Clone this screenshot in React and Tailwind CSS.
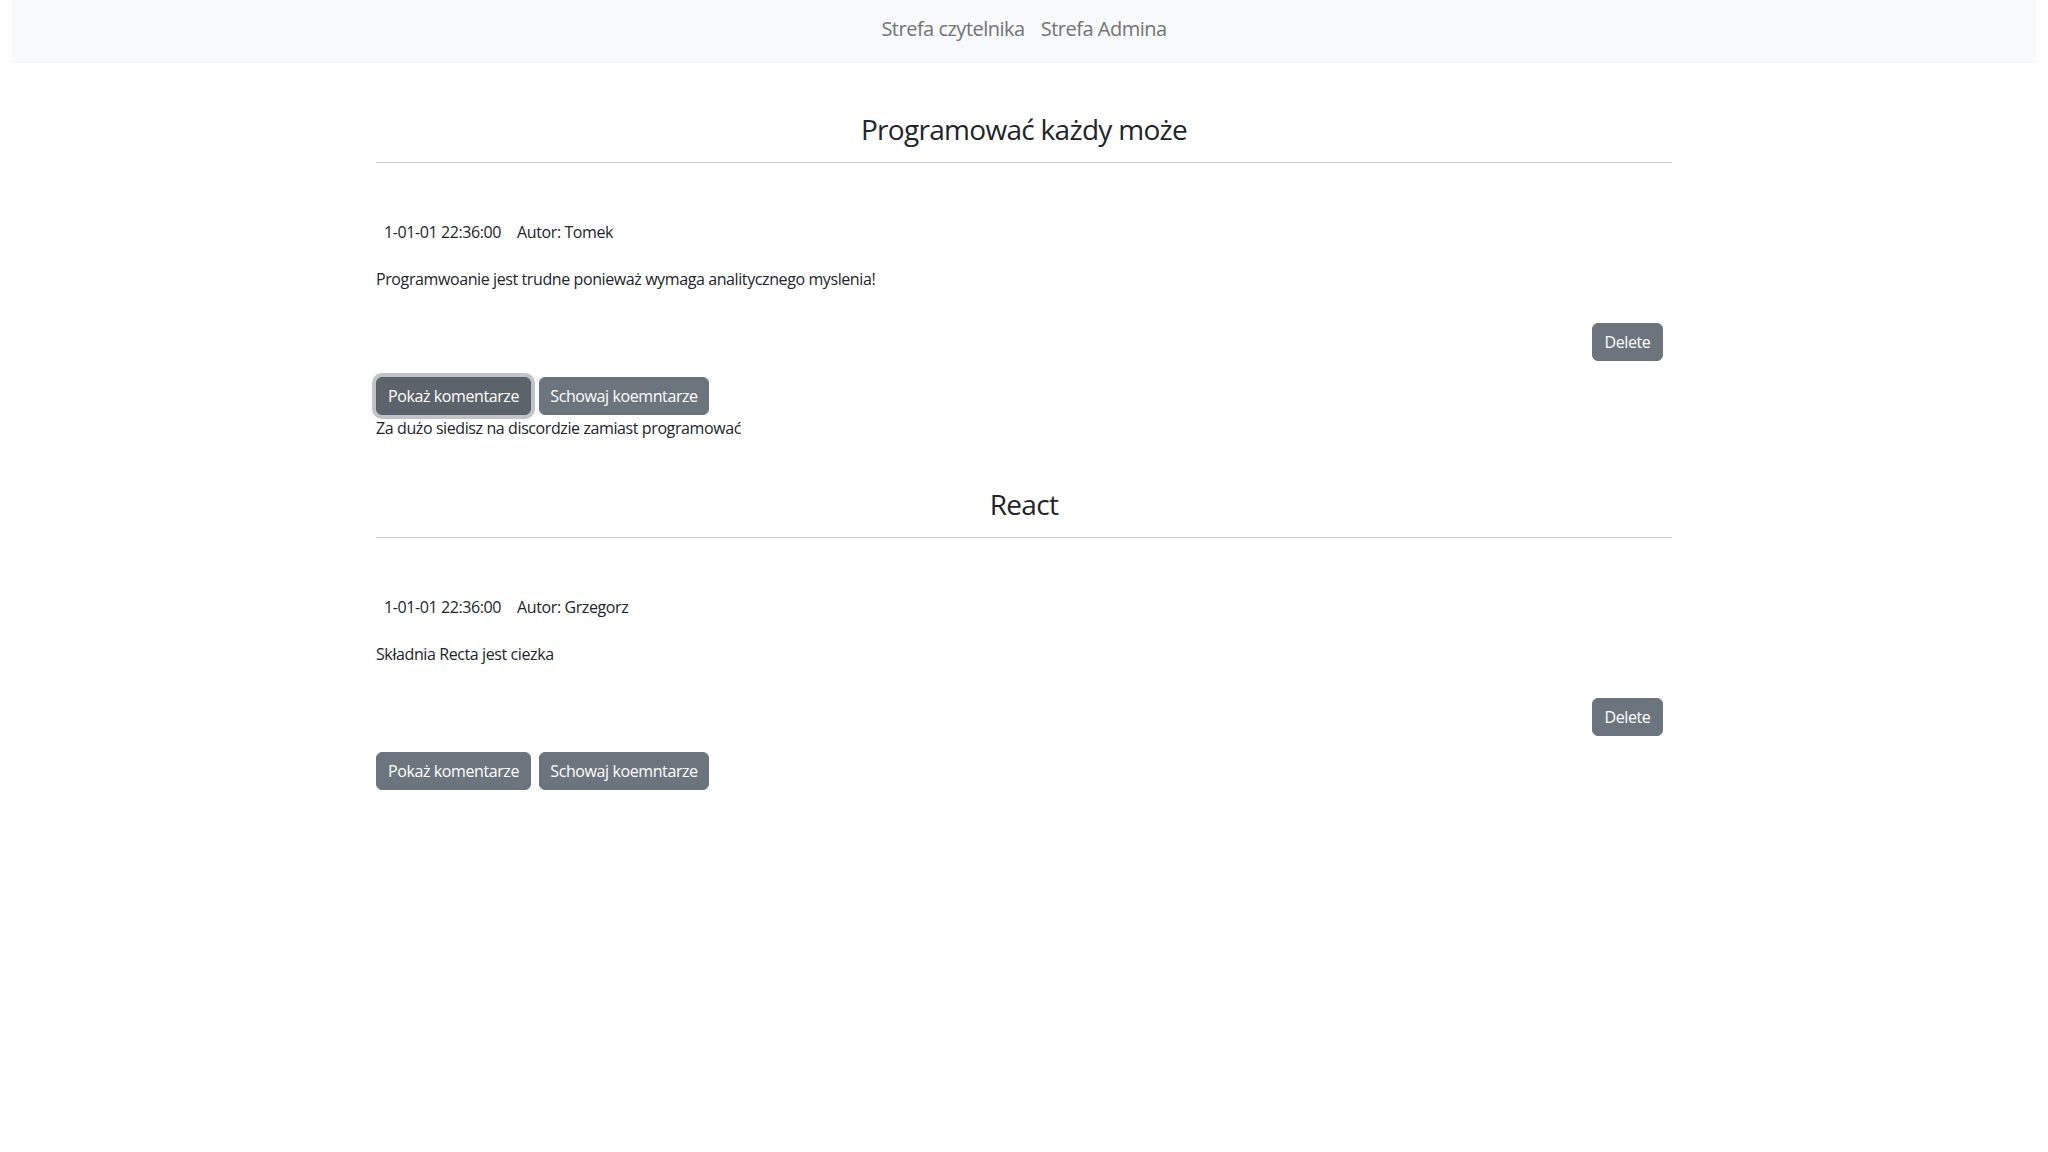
import React from "react";

const posts = [
  {
    title: "Programować każdy może",
    date: "1-01-01 22:36:00",
    author: "Tomek",
    body: "Programwoanie jest trudne ponieważ wymaga analitycznego myslenia!",
    comment: "Za dużo siedisz na discordzie zamiast programować",
    focused: true,
  },
  {
    title: "React",
    date: "1-01-01 22:36:00",
    author: "Grzegorz",
    body: "Składnia Recta jest ciezka",
    comment: null,
    focused: false,
  },
];

function Post({ p, first }) {
  return (
    <section className={first ? "mt-[49px]" : "mt-[47px]"}>
      <h3 className="text-center text-[28px] leading-[34px] font-normal tracking-tight text-[#212529]">
        {p.title}
      </h3>
      <div className="mt-[16px] h-px bg-[#c8c9ca]" />
      <div className="mt-[57px] flex text-[16px] leading-[24px] tracking-tight text-[#212529]">
        <span className="px-2">{p.date}</span>
        <span className="px-2">Autor: {p.author}</span>
      </div>
      <p className="mt-[23px] text-[16px] leading-[24px] tracking-tight text-[#212529]">{p.body}</p>
      <div className="mt-[32px] flex justify-end pr-[9px]">
        <button className="h-[38px] w-[71px] rounded-[6px] border border-[#6c757d] bg-[#6c757d] text-[16px] leading-[24px] tracking-tight text-white">
          Delete
        </button>
      </div>
      <div className="mt-[16px] flex gap-2">
        <button
          className={
            p.focused
              ? "h-[38px] w-[155px] rounded-[6px] border border-[#565e64] bg-[#5c636a] text-[16px] leading-[24px] tracking-tight text-white shadow-[0_0_0_4px_rgba(130,138,145,0.5)]"
              : "h-[38px] w-[155px] rounded-[6px] border border-[#6c757d] bg-[#6c757d] text-[16px] leading-[24px] tracking-tight text-white"
          }
        >
          Pokaż komentarze
        </button>
        <button className="h-[38px] w-[170px] rounded-[6px] border border-[#6c757d] bg-[#6c757d] text-[16px] leading-[24px] tracking-tight text-white">
          Schowaj koemntarze
        </button>
      </div>
      {p.comment && (
        <p className="mt-[1px] text-[16px] leading-[24px] tracking-tight text-[#212529]">{p.comment}</p>
      )}
    </section>
  );
}

export default function App() {
  return (
    <div
      className="min-h-screen bg-white"
      style={{ fontFamily: '"Open Sans", "Noto Sans", sans-serif' }}
    >
      <nav className="mx-3 flex h-[63px] items-start justify-center bg-[#f8f9fa] pt-[14px]">
        <div className="flex text-[20px] leading-[30px] tracking-tight text-[#737475]">
          <a className="px-2">Strefa czytelnika</a>
          <a className="px-2">Strefa Admina</a>
        </div>
      </nav>
      <main className="mx-auto w-[1296px]">
        {posts.map((p, i) => (
          <Post key={i} p={p} first={i === 0} />
        ))}
      </main>
    </div>
  );
}
